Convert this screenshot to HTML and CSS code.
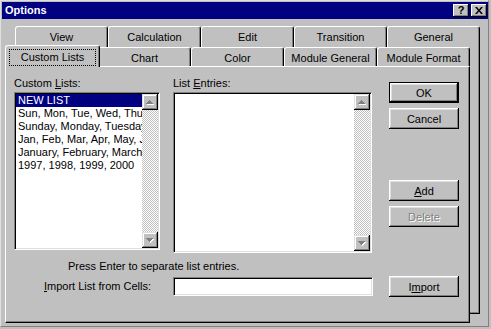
FILE: index.html
```html
<!DOCTYPE html>
<html lang="en">

<head>
    <meta charset="UTF-8">
    <title>Options</title>
    <link rel="stylesheet" href="styles.css">
</head>

<body>
    <div class="window">
        <div class="titlebar">
            <span class="title">Options</span>
            <div class="caption-buttons">
                <button class="cap-btn help">?</button>
                <button class="cap-btn close">
                    <svg width="8" height="7" viewBox="0 0 8 7"><path d="M0 0h2l2 2.4 2-2.4h2l-3 3.5 3 3.5h-2l-2-2.4-2 2.4h-2l3-3.5z" fill="#000"/></svg>
                </button>
            </div>
        </div>

        <div class="tabstack">
            <!-- back row of tabs -->
            <div class="back">
                <div class="tab-row">
                    <div class="tab">View</div>
                    <div class="tab">Calculation</div>
                    <div class="tab">Edit</div>
                    <div class="tab">Transition</div>
                    <div class="tab">General</div>
                </div>
                <div class="back-sheet"></div>
            </div>

            <!-- front row of tabs + page -->
            <div class="front">
                <div class="tab-row front-row">
                    <div class="tab selected"><span class="focus">Custom Lists</span></div>
                    <div class="tab">Chart</div>
                    <div class="tab">Color</div>
                    <div class="tab">Module General</div>
                    <div class="tab">Module Format</div>
                </div>

                <div class="panel">
                    <div class="main">
                        <div class="lists-col">
                            <div class="label">Custom <u>L</u>ists:</div>
                            <div class="listbox lists-box">
                                <div class="items">
                                    <div class="item active">NEW LIST</div>
                                    <div class="item">Sun, Mon, Tue, Wed, Thu, Fri, Sat</div>
                                    <div class="item">Sunday, Monday, Tuesday, Wednesday, Thursday</div>
                                    <div class="item">Jan, Feb, Mar, Apr, May, Jun, Jul, Aug</div>
                                    <div class="item">January, February, March, April</div>
                                    <div class="item">1997, 1998, 1999, 2000</div>
                                </div>
                                <div class="scrollbar">
                                    <div class="sb-btn"><svg width="16" height="16" viewBox="0 0 16 16"><path d="M8 7h1v1h1v1h1v1h1v1H5V10h1V9h1V8h1z" fill="#fff"/><path d="M7 6h1v1h1v1h1v1h1v1H4V9h1V8h1V7h1z" fill="#808080"/></svg></div>
                                    <div class="sb-track"></div>
                                    <div class="sb-btn"><svg width="16" height="16" viewBox="0 0 16 16"><path d="M5 7h7v1h-1v1h-1v1h-1v1h-1v-1h-1v-1h-1v-1h-1z" fill="#fff"/><path d="M4 6h7v1h-1v1h-1v1h-1v1h-1v-1h-1v-1h-1v-1h-1z" fill="#808080"/></svg></div>
                                </div>
                            </div>
                        </div>

                        <div class="entries-col">
                            <div class="label">List <u>E</u>ntries:</div>
                            <div class="listbox entries-box">
                                <div class="items"></div>
                                <div class="scrollbar">
                                    <div class="sb-btn"><svg width="16" height="16" viewBox="0 0 16 16"><path d="M8 7h1v1h1v1h1v1h1v1H5V10h1V9h1V8h1z" fill="#fff"/><path d="M7 6h1v1h1v1h1v1h1v1H4V9h1V8h1V7h1z" fill="#808080"/></svg></div>
                                    <div class="sb-track"></div>
                                    <div class="sb-btn"><svg width="16" height="16" viewBox="0 0 16 16"><path d="M5 7h7v1h-1v1h-1v1h-1v1h-1v-1h-1v-1h-1v-1h-1z" fill="#fff"/><path d="M4 6h7v1h-1v1h-1v1h-1v1h-1v-1h-1v-1h-1v-1h-1z" fill="#808080"/></svg></div>
                                </div>
                            </div>
                        </div>

                        <div class="buttons-col">
                            <button class="btn default">OK</button>
                            <button class="btn">Cancel</button>
                            <button class="btn add"><u>A</u>dd</button>
                            <button class="btn disabled">Delete</button>
                        </div>
                    </div>

                    <div class="hint">Press Enter to separate list entries.</div>

                    <div class="import-row">
                        <div class="import-label"><u>I</u>mport List from Cells:</div>
                        <div class="field"></div>
                        <button class="btn import">I<u>m</u>port</button>
                    </div>
                </div>
            </div>
        </div>
    </div>
</body>

</html>
```

FILE: styles.css
```css
* {
    box-sizing: border-box;
}

body {
    margin: 0;
    background-color: #c0c0c0;
    font-family: "Liberation Sans", Arial, sans-serif;
    font-size: 11px;
    line-height: 13px;
    color: #000;
}

u {
    text-underline-offset: 1px;
}

.window {
    width: 489px;
    height: 327px;
    border: 1px solid;
    border-color: #dfdfdf #808080 #808080 #dfdfdf;
    padding: 1px 0 0 1px;
}

/* title bar */

.titlebar {
    height: 17px;
    background-color: #000080;
    display: flex;
    align-items: center;
    padding: 0 1px 0 3px;
}

.title {
    color: #fff;
    font-weight: bold;
    line-height: 17px;
}

.caption-buttons {
    margin-left: auto;
    display: flex;
    gap: 2px;
}

.cap-btn {
    width: 16px;
    height: 13px;
    padding: 0;
    border: none;
    background-color: #c0c0c0;
    box-shadow: inset -1px -1px #000, inset 1px 1px #fff, inset -2px -2px #808080;
    font-family: inherit;
    font-size: 11px;
    font-weight: bold;
    line-height: 13px;
    display: flex;
    align-items: center;
    justify-content: center;
}

/* tabs */

.tabstack {
    display: grid;
    width: 475px;
    height: 297px;
    margin: 7px 0 0 3px;
}

.back,
.front {
    grid-area: 1 / 1;
    display: flex;
    flex-direction: column;
}

.back {
    margin: 0 0 9px 10px;
}

.front {
    margin: 19px 10px 0 0;
}

.tab-row {
    display: flex;
    height: 21px;
    flex-shrink: 0;
}

.tab {
    width: 93px;
    height: 21px;
    flex-shrink: 0;
    background-color: #c0c0c0;
    border: 1px solid #fff;
    border-bottom: none;
    border-right-color: #000;
    border-radius: 3px 3px 0 0;
    box-shadow: inset -1px 0 #808080;
    text-align: center;
    padding-top: 4px;
    white-space: nowrap;
}

.back-sheet {
    flex: 1;
    background-color: #c0c0c0;
    border-right: 1px solid #000;
    border-bottom: 1px solid #000;
    box-shadow: inset -1px -1px #808080;
}

.front-row {
    align-items: flex-end;
}

.front-row .tab {
    height: 19px;
}

.tab.selected {
    width: 95px;
    height: 22px;
    margin-right: -2px;
    margin-bottom: -1px;
    padding: 3px 3px 0;
    position: relative;
    z-index: 1;
}

.focus {
    display: block;
    height: 17px;
    border: 1px dotted #000;
    padding-top: 1px;
}

/* page */

.panel {
    flex: 1;
    background-color: #c0c0c0;
    border-top: 1px solid #fff;
    border-left: 1px solid #fff;
    border-right: 1px solid #000;
    border-bottom: 1px solid #000;
    box-shadow: inset -1px -1px #808080;
    padding: 10px 0 0 8px;
}

.main {
    display: flex;
}

.label {
    margin-bottom: 2px;
}

.lists-col {
    width: 146px;
}

.entries-col {
    width: 199px;
    margin-left: 13px;
}

.buttons-col {
    width: 70px;
    margin-left: 17px;
    padding-top: 5px;
    display: flex;
    flex-direction: column;
    gap: 5px;
}

.listbox {
    display: flex;
    background-color: #fff;
    border: 1px solid;
    border-color: #808080 #fff #fff #808080;
    box-shadow: inset 1px 1px #000, inset -1px -1px #dfdfdf;
    padding: 1px;
}

.lists-box {
    height: 158px;
}

.entries-box {
    height: 161px;
}

.items {
    flex: 1;
    overflow: hidden;
}

.item {
    white-space: nowrap;
    padding-left: 2px;
    height: 13px;
}

.item.active {
    background-color: #000080;
    color: #fff;
}

.scrollbar {
    width: 16px;
    display: flex;
    flex-direction: column;
}

.sb-btn {
    width: 16px;
    height: 16px;
    background-color: #c0c0c0;
    box-shadow: inset -1px -1px #000, inset 1px 1px #dfdfdf, inset -2px -2px #808080, inset 2px 2px #fff;
}

.sb-btn svg {
    display: block;
}

.sb-track {
    flex: 1;
    background-image: conic-gradient(#fff 25%, #c0c0c0 0 50%, #fff 0 75%, #c0c0c0 0);
    background-size: 2px 2px;
}

.btn {
    width: 70px;
    height: 21px;
    padding: 0;
    border: none;
    background-color: #c0c0c0;
    box-shadow: inset -1px -1px #000, inset 1px 1px #fff, inset -2px -2px #808080, inset 2px 2px #dfdfdf;
    font-family: inherit;
    font-size: 11px;
    color: #000;
}

.btn.default {
    border: 1px solid #000;
}

.btn.add {
    margin-top: 46px;
}

.btn.disabled {
    color: #808080;
    text-shadow: 1px 1px #fff;
}

.hint {
    margin: 7px 0 0 54px;
}

.import-row {
    display: flex;
    align-items: center;
    margin-top: 3px;
}

.import-label {
    width: 129px;
    margin-left: 30px;
}

.field {
    width: 200px;
    height: 19px;
    background-color: #fff;
    border: 1px solid;
    border-color: #808080 #fff #fff #808080;
    box-shadow: inset 1px 1px #000, inset -1px -1px #dfdfdf;
}

.btn.import {
    margin-left: 16px;
}
```
